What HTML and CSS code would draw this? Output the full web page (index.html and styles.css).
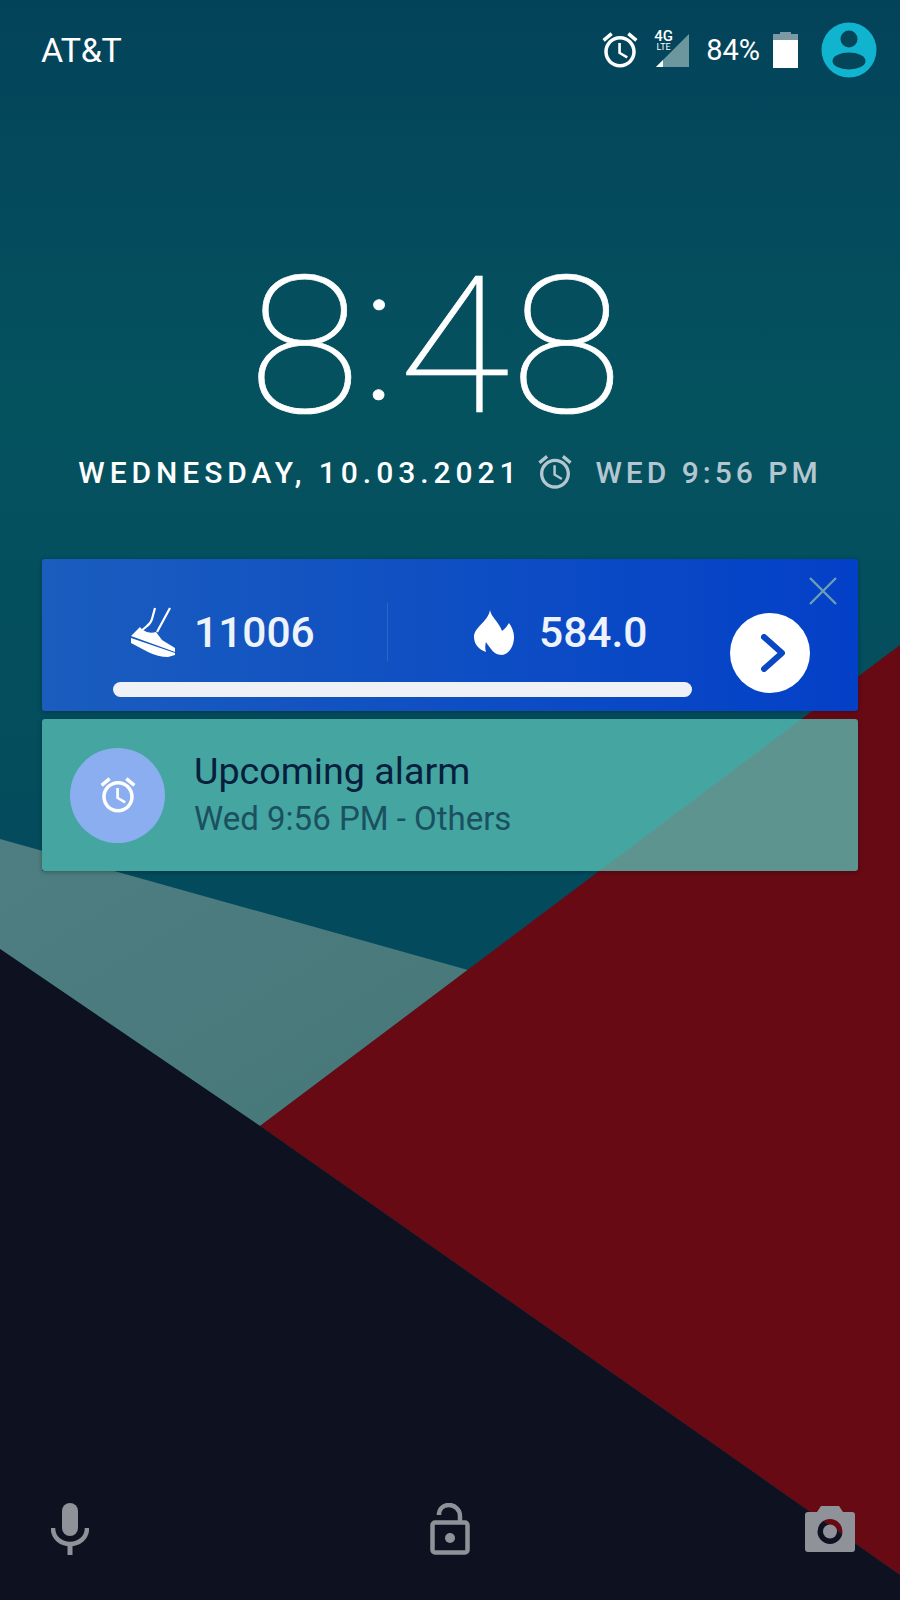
FILE: index.html
```html
<!DOCTYPE html>
<html lang="en">
<head>
    <meta charset="UTF-8">
    <meta name="viewport" content="width=device-width, initial-scale=1.0">
    <title>Lock Screen</title>
    <link rel="stylesheet" href="styles.css">
</head>
<body>

<svg width="0" height="0" class="defs">
    <symbol id="alarm" viewBox="0 0 24 24">
        <path d="M22 5.72l-4.6-3.86-1.29 1.53 4.6 3.86L22 5.72zM7.88 3.39L6.6 1.86 2 5.71l1.29 1.53 4.59-3.85zM12.5 8H11v6l4.75 2.85.75-1.23-4-2.37V8zM12 4c-4.97 0-9 4.03-9 9s4.02 9 9 9c4.97 0 9-4.03 9-9s-4.03-9-9-9zm0 16c-3.87 0-7-3.13-7-7s3.13-7 7-7 7 3.13 7 7-3.13 7-7 7z"/>
    </symbol>
</svg>

<div id="screen">
    <svg class="wallpaper" viewBox="0 0 900 1600">
        <defs>
            <linearGradient id="tealBg" x1="0" y1="0" x2="0" y2="1">
                <stop offset="0" stop-color="#03435a"/>
                <stop offset="0.25" stop-color="#05525f"/>
                <stop offset="0.6" stop-color="#034a5c"/>
            </linearGradient>
            <linearGradient id="paleBg" x1="0" y1="0" x2="1" y2="1">
                <stop offset="0" stop-color="#4f7e82"/>
                <stop offset="1" stop-color="#467778"/>
            </linearGradient>
        </defs>
        <rect width="900" height="1600" fill="url(#tealBg)"/>
        <polygon points="0,839 468,970 260,1126 0,949" fill="url(#paleBg)"/>
        <!-- the wedge doesn't show through the alarm card -->
        <rect x="42" y="830" width="300" height="41" fill="#044f5e"/>
        <polygon points="900,645 900,1575 260,1126" fill="#670a14"/>
        <polygon points="0,949 260,1126 900,1575 900,1600 0,1600" fill="#0e111f"/>
    </svg>

    <div class="statusBar">
        <span class="carrier">AT&amp;T</span>
        <div class="statusIcons">
            <svg class="statusAlarm"><use href="#alarm"/></svg>
            <div class="network">
                <div class="netLabel"><span class="net4g">4G</span><span class="netLte">LTE</span></div>
                <svg class="signal" viewBox="0 0 34 33">
                    <polygon points="0,33 33,0 33,33" fill="#6d979e"/>
                    <polygon points="0,33 7,26 7,33" fill="#ffffff"/>
                </svg>
            </div>
            <span class="battery">84%</span>
            <svg class="batteryIcon" viewBox="0 0 25 36">
                <path d="M7 0h11v2h7v6H0V2h7z" fill="#7c9aa3"/>
                <rect y="8" width="25" height="28" fill="#ffffff"/>
            </svg>
            <svg class="avatar" viewBox="0 0 56 56">
                <circle cx="28" cy="28" r="27.500" fill="#10b4cf"/>
                <circle cx="28" cy="17" r="8.500" fill="#04455a"/>
                <ellipse cx="28" cy="39" rx="16.500" ry="8.500" fill="#04455a"/>
            </svg>
        </div>
    </div>

    <div class="clock">8<span class="colon">:</span>48</div>

    <div class="dateRow">
        <span class="date">WEDNESDAY, 10.03.2021</span>
        <svg class="dateAlarm"><use href="#alarm"/></svg>
        <span class="nextAlarm">WED 9:56 PM</span>
    </div>

    <div class="cards">
        <div class="card fitCard">
            <div class="stats">
                <div class="stat stepStat">
                    <svg class="shoe" viewBox="0 0 46 50">
                        <path d="M25 1l-3 11q-1 4-5 7L10 25M40 1L27 25" fill="none" stroke="#fff" stroke-width="2.200"/>
                        <path d="M10 20c3 4 9 7 16 5l6 8 13 8v4L1 29z" fill="#fff"/>
                        <path d="M1 31l44 15v2l-7 2q-10 0-20-5L1 36z" fill="#fff"/>
                    </svg>
                    <span class="statValue">11006</span>
                </div>
                <div class="statDivider"></div>
                <div class="stat fireStat">
                    <svg class="flame" viewBox="0 0 40 45">
                        <path d="M16 0C17 7 25 12 28 21C31 19 33 16 35 13C38 17 40 22 40 27C40 37 34 45 28 45C23 45 19 42 17 39C15 36 13 34 12 32C11 35 11 39 12 42C6 40 0 35 0 27C0 17 14 12 16 0Z" fill="#fff"/>
                    </svg>
                    <span class="statValue">584.0</span>
                </div>
            </div>
            <div class="progress"></div>
            <svg class="closeIcon" viewBox="0 0 28 28">
                <path d="M1 1l26 26M27 1L1 27" stroke="#6c9fb4" stroke-width="2.400" fill="none"/>
            </svg>
            <div class="goBtn">
                <svg viewBox="0 0 24 38">
                    <path d="M3 3l18 16L3 35" fill="none" stroke="#0a47c4" stroke-width="6" stroke-linecap="round" stroke-linejoin="round"/>
                </svg>
            </div>
        </div>

        <div class="card alarmCard">
            <div class="alarmBadge"><svg><use href="#alarm"/></svg></div>
            <div class="alarmText">
                <div class="alarmTitle">Upcoming alarm</div>
                <div class="alarmSub">Wed 9:56 PM - Others</div>
            </div>
        </div>
    </div>

    <div class="lockBar">
        <svg class="micIcon" viewBox="0 0 38 52">
            <rect x="11" y="0" width="16" height="33" rx="8" fill="#8f9399"/>
            <path d="M2 25c0 10 8 16 17 16s17-6 17-16" fill="none" stroke="#8f9399" stroke-width="4.500"/>
            <rect x="16.500" y="40" width="5" height="12" fill="#8f9399"/>
        </svg>
        <svg class="lockIcon" viewBox="0 0 40 52">
            <path d="M9 12C9 6 13 2 19 2s11 5 11 11v6" fill="none" stroke="#8f9399" stroke-width="4.500"/>
            <rect x="2.500" y="19.500" width="35" height="30" rx="2.500" fill="none" stroke="#8f9399" stroke-width="4.500"/>
            <circle cx="20" cy="35" r="5" fill="#8f9399"/>
        </svg>
        <svg class="cameraIcon" viewBox="0 0 50 46">
            <path fill-rule="evenodd" d="M16 0h18l4 6h9a3 3 0 0 1 3 3v34a3 3 0 0 1-3 3H3a3 3 0 0 1-3-3V9a3 3 0 0 1 3-3h9zM25 13a12.500 12.500 0 1 0 0 25a12.500 12.500 0 0 0 0-25z" fill="#8f9399"/>
            <circle cx="25" cy="25.500" r="7" fill="#8f9399"/>
        </svg>
    </div>
</div>

</body>
</html>
```

FILE: styles.css
```css
html, body {
    margin: 0;
    padding: 0;
}
body {
    font-family: "Roboto", "Liberation Sans", sans-serif;
    color: white;
}
.defs {
    position: absolute;
}
#screen {
    position: relative;
    width: 900px;
    height: 1600px;
    overflow: hidden;
    display: flex;
    flex-direction: column;
}
.wallpaper {
    position: absolute;
    top: 0;
    left: 0;
    width: 900px;
    height: 1600px;
}
.statusBar, .clock, .dateRow, .cards, .lockBar {
    position: relative;
}

/* status bar */
.statusBar {
    display: flex;
    justify-content: space-between;
    align-items: center;
    height: 56px;
    padding: 22px 23px 0 41px;
}
.carrier {
    font-size: 34px;
    letter-spacing: -0.3px;
}
.statusIcons {
    display: flex;
    align-items: center;
}
.statusAlarm {
    width: 42px;
    height: 42px;
    fill: white;
    margin-right: 15px;
}
.network {
    display: flex;
    align-items: flex-end;
    position: relative;
    width: 34px;
    height: 34px;
    margin-right: 16px;
}
.netLabel {
    position: absolute;
    top: -3px;
    left: -1px;
    display: flex;
    flex-direction: column;
    align-items: center;
    width: 17px;
}
.net4g {
    font-size: 15px;
    font-weight: 500;
    line-height: 13px;
}
.netLte {
    font-size: 9px;
    line-height: 8px;
}
.signal {
    width: 34px;
    height: 33px;
}
.battery {
    font-size: 29px;
    margin-right: 13px;
}
.batteryIcon {
    width: 25px;
    height: 36px;
    margin-right: 23px;
}
.avatar {
    width: 56px;
    height: 56px;
}

/* clock */
.clock {
    margin: 178px 28px 0 0;
    height: 182px;
    text-align: center;
    font-weight: 100;
    font-size: 192px;
    line-height: 182px;
    letter-spacing: 1px;
    -webkit-text-stroke: 0.7px white;
    transform: scaleX(1.06);
}
.colon {
    position: relative;
    top: -13px;
}
.dateRow {
    display: flex;
    align-items: center;
    justify-content: center;
    margin-top: 10px;
    height: 48px;
    font-size: 30px;
    font-weight: 500;
    letter-spacing: 4.95px;
}
.dateAlarm {
    width: 40px;
    height: 40px;
    fill: #b4c6cf;
    margin: 0 20px 0 14px;
}
.nextAlarm {
    color: #b4c6cf;
    letter-spacing: 4px;
}

/* notification cards */
.cards {
    display: flex;
    flex-direction: column;
    gap: 8px;
    margin: 63px 42px 0;
}
.card {
    height: 152px;
    border-radius: 3px;
    box-shadow: 0 1px 5px rgba(0, 0, 0, 0.3);
}
.fitCard {
    position: relative;
    background: linear-gradient(to right, #1a5dbe, #0340c8);
    padding-top: 43px;
    box-sizing: border-box;
}
.stats {
    display: flex;
    align-items: center;
    height: 60px;
}
.stat {
    display: flex;
    align-items: center;
}
.stepStat {
    width: 345px;
    padding-left: 88px;
    box-sizing: border-box;
}
.shoe {
    width: 46px;
    height: 50px;
    margin-right: 18px;
}
.statValue {
    font-size: 42.500px;
    font-weight: 500;
    color: #eef3fa;
}
.statDivider {
    width: 1px;
    height: 58px;
    background: rgba(255, 255, 255, 0.12);
}
.fireStat {
    padding-left: 86px;
}
.flame {
    width: 40px;
    height: 45px;
    margin-right: 25px;
}
.progress {
    width: 579px;
    height: 15px;
    margin: 20px 0 0 71px;
    background: #eef2f7;
    border-radius: 8px;
}
.closeIcon {
    position: absolute;
    top: 18px;
    right: 21px;
    width: 28px;
    height: 28px;
}
.goBtn {
    position: absolute;
    top: 54px;
    right: 48px;
    width: 80px;
    height: 80px;
    border-radius: 50%;
    background: white;
    display: flex;
    align-items: center;
    justify-content: center;
}
.goBtn svg {
    width: 24px;
    height: 38px;
    margin-left: 5px;
}
.alarmCard {
    display: flex;
    align-items: center;
    background: rgba(91, 195, 184, 0.75);
}
.alarmBadge {
    width: 95px;
    height: 95px;
    margin-left: 28px;
    margin-right: 29px;
    border-radius: 50%;
    background: #8aaef0;
    display: flex;
    align-items: center;
    justify-content: center;
}
.alarmBadge svg {
    width: 42px;
    height: 42px;
    fill: white;
}
.alarmTitle {
    font-size: 37.700px;
    line-height: 48px;
    color: #071e3c;
}
.alarmSub {
    font-size: 33px;
    line-height: 48px;
    color: #1a505f;
}

/* bottom shortcuts */
.lockBar {
    display: flex;
    justify-content: space-between;
    align-items: center;
    margin-top: auto;
    padding: 0 45px 45px 51px;
}
.micIcon {
    width: 38px;
    height: 52px;
}
.lockIcon {
    width: 40px;
    height: 52px;
    margin-left: 6px;
}
.cameraIcon {
    width: 50px;
    height: 46px;
}
```
